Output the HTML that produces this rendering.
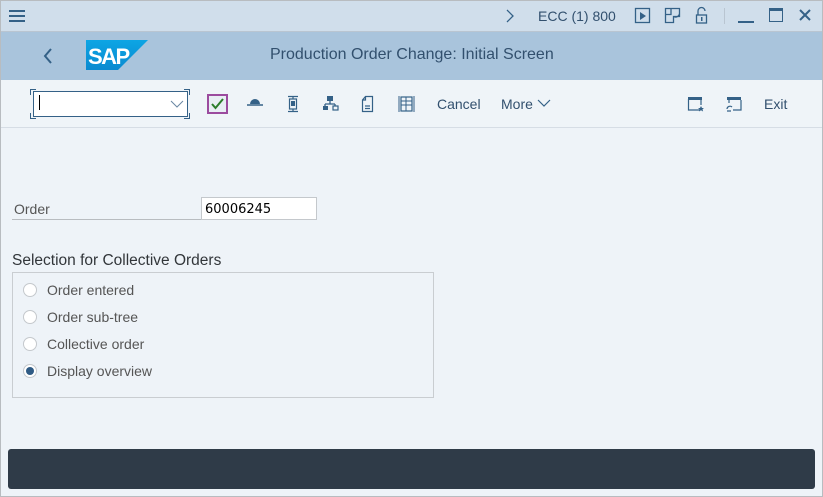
<!DOCTYPE html>
<html><head><style>
*{margin:0;padding:0;box-sizing:border-box}
body{width:823px;height:497px;overflow:hidden;background:#eef3f8;font-family:"Liberation Sans",sans-serif;color:#32363a;position:relative}
.frame{position:absolute;inset:0;border:1px solid #b8bcc0}
.a{position:absolute}
.top{left:0;top:0;width:823px;height:32px;background:#d0deeb;border-bottom:1px solid #b9c5d1}
.title{left:0;top:32px;width:823px;height:48px;background:#a9c4dc}
.tb{left:0;top:80px;width:823px;height:48px;background:#eff4f8;border-bottom:1px solid #d6dde5}
.t{font-size:14px;color:#32363a}
</style></head><body>
<div class="a top"></div>
<div class="a title"></div>
<div class="a tb"></div>
<div class="a" style="left:9px;top:10px;width:16px;height:2px;background:#346187"></div>
<div class="a" style="left:9px;top:15px;width:16px;height:2px;background:#346187"></div>
<div class="a" style="left:9px;top:20px;width:16px;height:2px;background:#346187"></div>
<svg class="a" style="left:505px;top:9px" width="10" height="14"><path d="M2 1l6 6-6 6" fill="none" stroke="#346187" stroke-width="1.3"/></svg>
<div class="a t" style="left:538px;top:8px;font-size:14px;color:#32506e">ECC (1) 800</div>
<svg class="a" style="left:634px;top:7px" width="18" height="18"><rect x="1.5" y="1.5" width="14" height="14" fill="none" stroke="#346187" stroke-width="1.3"/><path d="M6 5l6 4-6 4z" fill="#346187"/></svg>
<svg class="a" style="left:664px;top:7px" width="18" height="18"><path d="M1.5 1.5h14v8h-6v6h-8z M7 1.5v6H1.5 M9.5 9.5a4 4 0 0 0 6-3" fill="none" stroke="#346187" stroke-width="1.3"/></svg>
<svg class="a" style="left:695px;top:6px" width="14" height="19"><path d="M3 9V5a3.5 3.5 0 0 1 7 0" fill="none" stroke="#346187" stroke-width="1.3"/><rect x="1.5" y="9" width="10" height="8" fill="none" stroke="#346187" stroke-width="1.3"/><rect x="6" y="11" width="1.5" height="4" fill="#346187"/></svg>
<div class="a" style="left:724px;top:8px;width:1px;height:16px;background:#b9c5d1"></div>
<div class="a" style="left:738px;top:21px;width:16px;height:2px;background:#346187"></div>
<div class="a" style="left:769px;top:8px;width:14px;height:14px;border:1.5px solid #346187;border-top:3px solid #346187"></div>
<svg class="a" style="left:798px;top:8px" width="14" height="14"><path d="M2 2l10 10M12 2L2 12" stroke="#346187" stroke-width="2"/></svg>
<svg class="a" style="left:43px;top:47px" width="10" height="18"><path d="M8 2L2 9l6 7" fill="none" stroke="#346187" stroke-width="2"/></svg>
<svg class="a" style="left:86px;top:40px" width="62" height="30"><defs><linearGradient id="g" x1="0" x2="0" y1="0" y2="1"><stop offset="0" stop-color="#0da5e4"/><stop offset="1" stop-color="#0a8ad0"/></linearGradient></defs><path d="M0 0h62L32 30H0z" fill="url(#g)"/><text x="2" y="24" font-family="Liberation Sans" font-weight="bold" font-size="22" fill="#fff" letter-spacing="-1.5">SAP</text></svg>
<div class="a" style="left:270px;top:46px;font-size:16px;color:#32506e">Production Order Change: Initial Screen</div>
<div class="a" style="left:33px;top:91px;width:155px;height:26px;background:#fff;border:1px solid #346187"></div>
<div class="a" style="left:30px;top:89px;width:6px;height:6px;border-left:1.5px solid #346187;border-top:1.5px solid #346187"></div>
<div class="a" style="left:184px;top:89px;width:6px;height:6px;border-right:1.5px solid #346187;border-top:1.5px solid #346187"></div>
<div class="a" style="left:30px;top:113px;width:6px;height:6px;border-left:1.5px solid #346187;border-bottom:1.5px solid #346187"></div>
<div class="a" style="left:184px;top:113px;width:6px;height:6px;border-right:1.5px solid #346187;border-bottom:1.5px solid #346187"></div>
<div class="a" style="left:39px;top:95px;width:1px;height:15px;background:#000"></div>
<svg class="a" style="left:170px;top:100px" width="14" height="8"><path d="M1 1l6 6 6-6" fill="none" stroke="#6a87a3" stroke-width="1"/></svg>
<div class="a" style="left:207px;top:94px;width:21px;height:20px;border:2px solid #9b4b9e;background:#e8eef4"></div>
<svg class="a" style="left:209px;top:96px" width="17" height="16"><path d="M3 8l3.5 4L14 3" fill="none" stroke="#2b7d2b" stroke-width="2"/></svg>
<svg class="a" style="left:246px;top:96px" width="18" height="12"><path d="M4 8a5 5 0 0 1 10 0z" fill="#346187"/><path d="M1 9h16" stroke="#346187" stroke-width="1.5"/></svg>
<svg class="a" style="left:286px;top:95px" width="14" height="18"><path d="M2 1.5h10M2 16.5h10M7 1.5v2M7 14.5v2" stroke="#346187" stroke-width="1.2"/><rect x="3.5" y="4" width="7" height="10" fill="none" stroke="#346187" stroke-width="1.2"/><rect x="5" y="6" width="4" height="5" fill="#346187"/></svg>
<svg class="a" style="left:322px;top:95px" width="17" height="17"><rect x="5" y="1" width="6" height="5" fill="#346187"/><path d="M8 6v3M3 9h10M3 9v2M13 9v2" stroke="#346187" stroke-width="1.3" fill="none"/><rect x="1" y="11" width="5" height="4" fill="#346187"/><rect x="11" y="11" width="5" height="4" fill="none" stroke="#346187" stroke-width="1.2"/></svg>
<svg class="a" style="left:361px;top:95px" width="14" height="18"><path d="M4.5 1.5h7v15h-10V5z M4.5 1.5V5H1.5 M4 11h5M4 13.5h5" fill="none" stroke="#346187" stroke-width="1.2"/></svg>
<svg class="a" style="left:398px;top:95px" width="17" height="18"><rect x="3" y="2" width="11" height="14" fill="none" stroke="#346187" stroke-width="1.2"/><path d="M1 1v16M16 1v16M3 6h11M3 10h11M8 2v14" stroke="#346187" stroke-width="1"/></svg>
<div class="a t" style="left:437px;top:96px;color:#32506e">Cancel</div>
<div class="a t" style="left:501px;top:96px;color:#32506e">More</div>
<svg class="a" style="left:537px;top:99px" width="14" height="8"><path d="M1 1l6 6 6-6" fill="none" stroke="#346187" stroke-width="1.2"/></svg>
<svg class="a" style="left:687px;top:96px" width="18" height="17"><path d="M1.5 3v11h12M14 3v6" fill="none" stroke="#346187" stroke-width="1.2"/><rect x="1" y="1" width="14" height="3" fill="#346187"/><path d="M14 10l1 2h2l-1.5 1.3.6 2.2-2.1-1.3-2.1 1.3.6-2.2L11 12h2z" fill="#346187"/></svg>
<svg class="a" style="left:725px;top:96px" width="18" height="17"><rect x="2" y="1" width="14" height="3" fill="#346187"/><path d="M4 4v3M16 4v10H8" fill="none" stroke="#346187" stroke-width="1.2"/><path d="M2 13a3 3 0 0 1 5-2M2 15h4" fill="none" stroke="#346187" stroke-width="1.2"/></svg>
<div class="a t" style="left:764px;top:96px;color:#32506e">Exit</div>
<div class="a" style="left:14px;top:201px;font-size:14px;color:#555">Order</div>
<div class="a" style="left:12px;top:219px;width:190px;height:1px;background:#b8bcc0"></div>
<div class="a" style="left:201px;top:197px;width:116px;height:23px;background:#fff;border:1px solid #c4c8cc"></div>
<div class="a" style="left:205px;top:202px;color:#000;font-family:'DejaVu Sans',sans-serif;font-size:13px">60006245</div>
<div class="a" style="left:12px;top:252px;font-size:15.5px;color:#32363a">Selection for Collective Orders</div>
<div class="a" style="left:12px;top:272px;width:422px;height:126px;border:1px solid #c9cdd1"></div>
<div class="a" style="left:23px;top:283px;width:14px;height:14px;border-radius:50%;background:#fff;border:1px solid #c4c8cc"></div>
<div class="a" style="left:23px;top:310px;width:14px;height:14px;border-radius:50%;background:#fff;border:1px solid #c4c8cc"></div>
<div class="a" style="left:23px;top:337px;width:14px;height:14px;border-radius:50%;background:#fff;border:1px solid #c4c8cc"></div>
<div class="a" style="left:23px;top:364px;width:14px;height:14px;border-radius:50%;background:#fff;border:1px solid #c4c8cc"></div>
<div class="a" style="left:26px;top:367px;width:8px;height:8px;border-radius:50%;background:#2f5b85"></div>
<div class="a" style="left:47px;top:282px;font-size:14px;color:#555">Order entered</div>
<div class="a" style="left:47px;top:309px;font-size:14px;color:#555">Order sub-tree</div>
<div class="a" style="left:47px;top:336px;font-size:14px;color:#555">Collective order</div>
<div class="a" style="left:47px;top:363px;font-size:14px;color:#555">Display overview</div>
<div class="a" style="left:8px;top:449px;width:807px;height:40px;background:#2f3b48;border-radius:3px"></div>
<div class="frame"></div>
</body></html>
